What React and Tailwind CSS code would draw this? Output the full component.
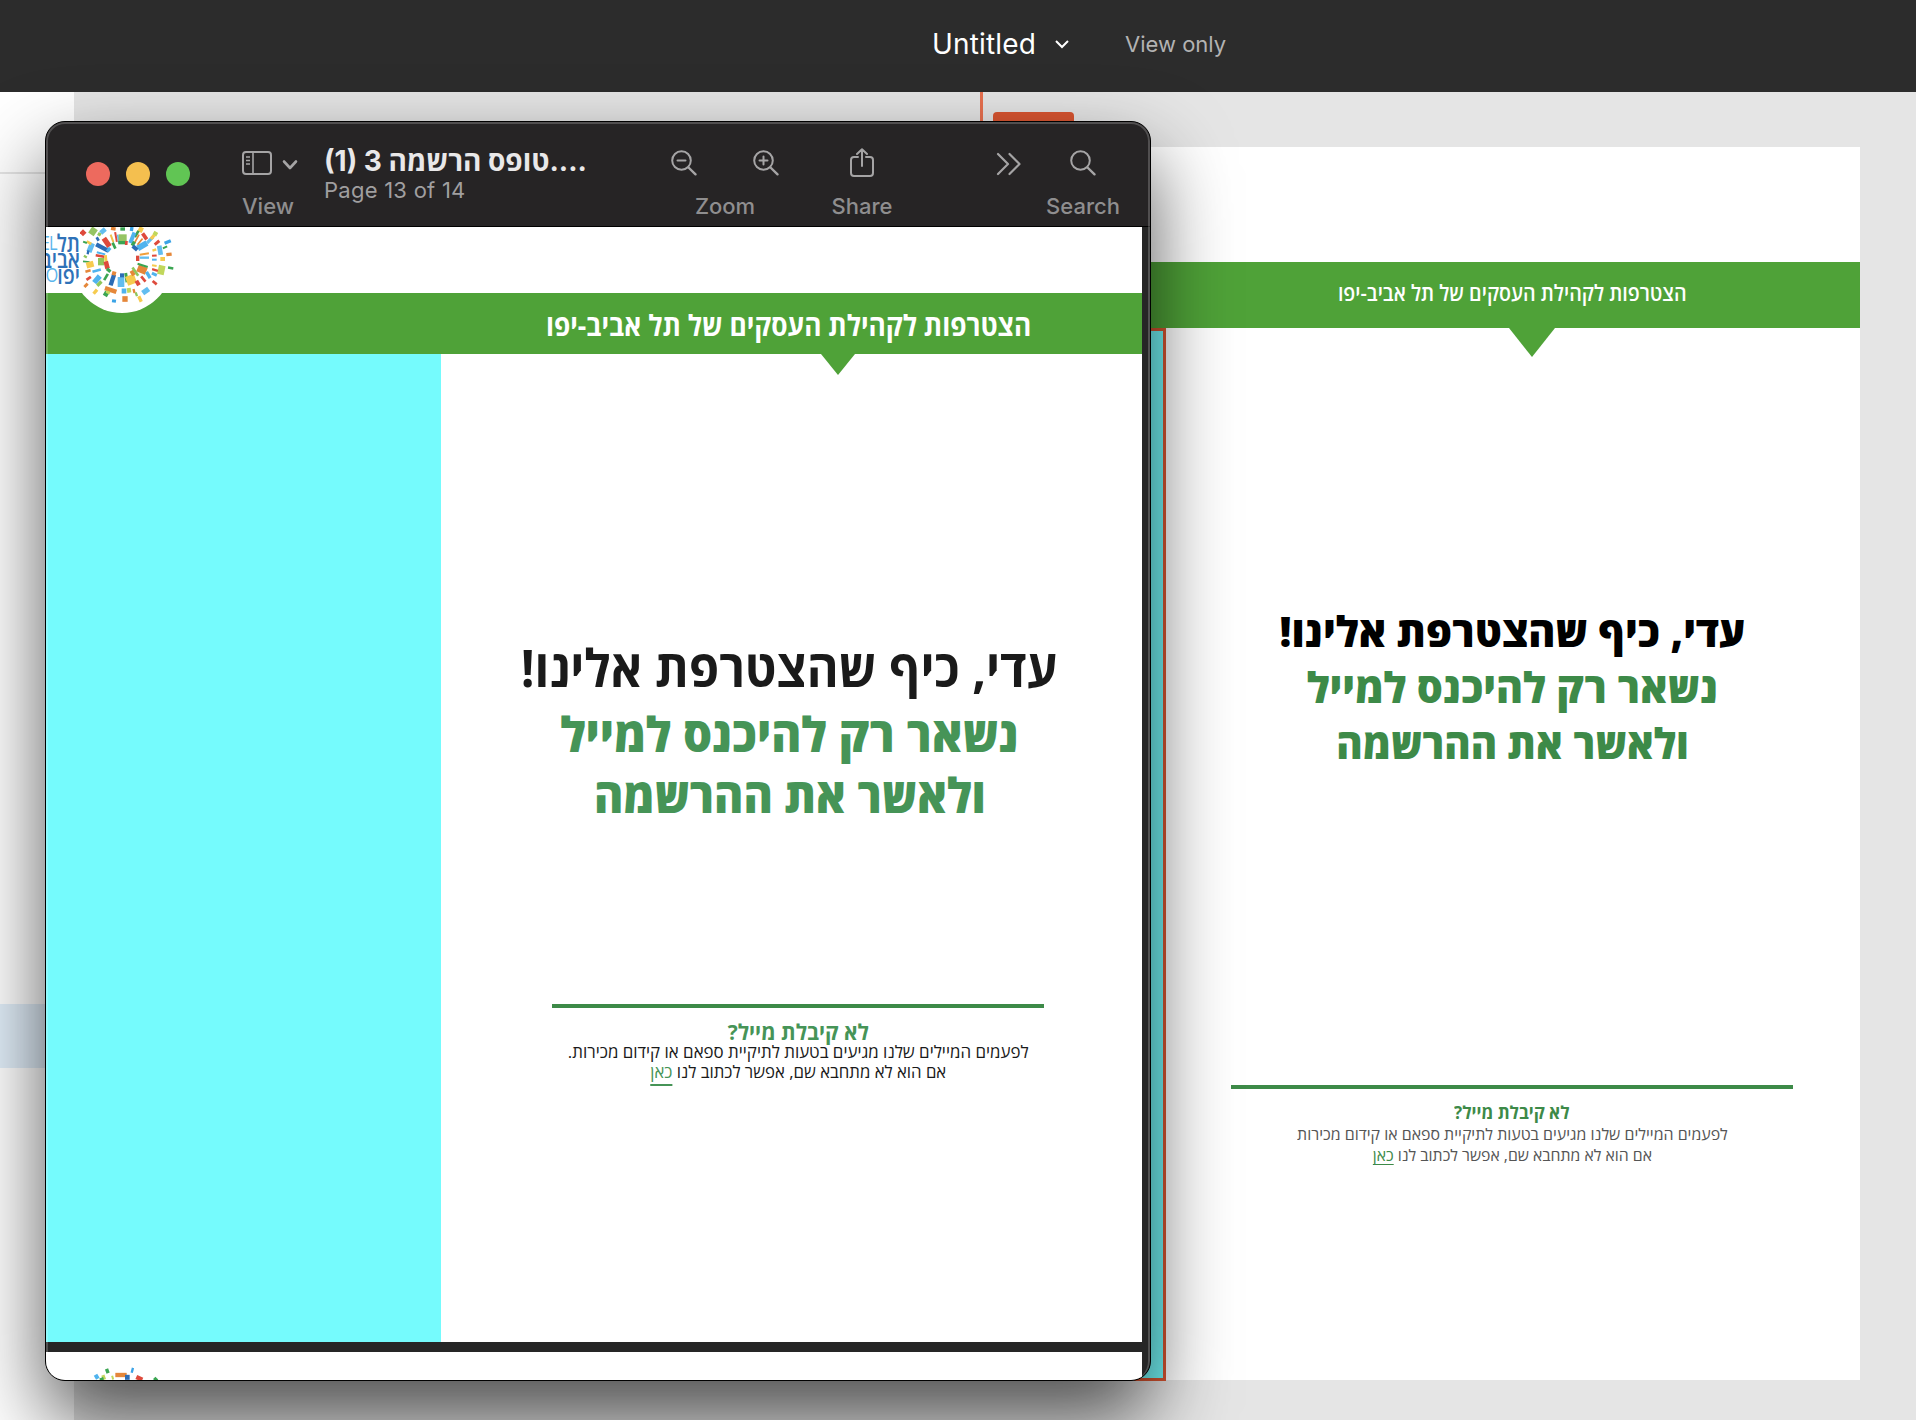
import React from "react";

const HEB = "font-['Open_Sans','Liberation_Sans',sans-serif]";

const BURST = [
  [129, 53, 15, 15, 45, "#de4a3c"], [159, 49, 20, 22, 35, "#95c463"], [189, 48, 18, 14, -40, "#62bdf0"],
  [178, 58, 10, 10, 30, "#8fc65c"], [220, 41, 14, 10, 10, "#e5873a"], [248, 42, 14, 10, 0, "#3ba552"],
  [275, 42, 10, 12, 10, "#3aa3e6"], [302, 44, 14, 16, 25, "#f6cb4f"], [290, 57, 8, 22, 30, "#3f9f4f"],
  [200, 82, 16, 30, -35, "#de4a3c"], [173, 72, 8, 12, -30, "#2b6cb5"], [187, 98, 13, 42, -62, "#2b6cb5"],
  [206, 104, 14, 10, -50, "#4fb3ee"], [222, 92, 8, 20, -25, "#3ba552"], [216, 70, 6, 24, -20, "#f0c04a"],
  [228, 66, 6, 30, -10, "#de4a3c"], [235, 72, 5, 26, -8, "#62bdf0"], [248, 68, 24, 20, 0, "#95c463"],
  [246, 83, 22, 10, 0, "#3ba552"], [259, 84, 8, 12, 5, "#de4a3c"], [277, 68, 12, 34, 22, "#4fb3ee"],
  [290, 72, 5, 30, 28, "#e5873a"], [280, 86, 10, 14, 30, "#3ba552"], [307, 92, 32, 18, -30, "#4fb3ee"],
  [285, 99, 18, 12, 40, "#2b6cb5"], [300, 80, 24, 5, -50, "#e5873a"], [314, 64, 22, 11, 55, "#de4a3c"],
  [330, 75, 10, 26, 45, "#62bdf0"], [338, 66, 10, 16, 40, "#f6cb4f"], [346, 56, 13, 12, 30, "#c1d75b"],
  [351, 83, 18, 9, -40, "#de4a3c"], [383, 81, 20, 10, -22, "#3aa3e6"], [360, 106, 14, 28, -10, "#62bdf0"],
  [343, 105, 12, 7, -20, "#f6cb4f"], [375, 97, 14, 6, -25, "#3ba552"], [343, 122, 14, 6, -5, "#de4a3c"],
  [343, 134, 14, 6, 0, "#4fb3ee"], [387, 118, 16, 10, -6, "#e5873a"], [368, 132, 14, 12, 0, "#f6cb4f"],
  [152, 98, 16, 28, 22, "#62bdf0"], [147, 83, 16, 8, 30, "#f6cb4f"], [135, 82, 12, 6, 20, "#3ba552"],
  [144, 112, 7, 12, 10, "#2b6cb5"], [139, 140, 20, 5, 5, "#3ba552"], [150, 149, 22, 18, -15, "#f6cb4f"],
  [136, 125, 10, 7, 30, "#8fc65c"], [183, 140, 18, 22, 0, "#8fc65c"], [180, 123, 26, 8, 10, "#de4a3c"],
  [183, 115, 26, 6, 14, "#4fb3ee"], [197, 130, 9, 20, -5, "#f6cb4f"], [200, 150, 14, 22, -15, "#de4a3c"],
  [170, 167, 26, 8, -15, "#4fb3ee"], [144, 168, 16, 8, -15, "#e5873a"], [206, 166, 14, 10, 40, "#3ba552"],
  [138, 211, 14, 9, -45, "#e5873a"], [146, 190, 16, 8, -35, "#de4a3c"], [166, 230, 10, 16, 40, "#f6cb4f"],
  [171, 193, 26, 16, -50, "#4fb3ee"], [178, 206, 18, 10, -45, "#8fc65c"], [198, 186, 8, 22, 30, "#3ba552"],
  [217, 195, 13, 34, 18, "#2b6cb5"], [222, 175, 12, 12, 15, "#e5873a"], [243, 201, 20, 30, 0, "#62bdf0"],
  [246, 181, 12, 12, 0, "#2b6cb5"], [259, 188, 9, 28, -8, "#3ba552"], [273, 194, 28, 28, -20, "#f6cb4f"],
  [278, 174, 12, 16, -30, "#e5873a"], [293, 204, 12, 16, -30, "#de4a3c"], [286, 170, 8, 30, -35, "#8fc65c"],
  [306, 164, 28, 22, 22, "#e5873a"], [308, 151, 32, 6, 18, "#3ba552"], [325, 180, 10, 22, -30, "#4fb3ee"],
  [344, 203, 16, 8, 40, "#de4a3c"], [364, 165, 20, 28, 12, "#c1d75b"], [345, 165, 18, 7, 15, "#de4a3c"],
  [343, 178, 16, 9, 25, "#4fb3ee"], [392, 159, 16, 8, 10, "#3ba552"], [343, 152, 14, 6, 10, "#f6cb4f"],
  [293, 130, 10, 16, 0, "#de4a3c"], [313, 117, 28, 6, -10, "#f0a03c"], [313, 128, 28, 7, 0, "#62bdf0"],
  [212, 225, 36, 14, 18, "#e5873a"], [198, 237, 14, 14, 30, "#3ba552"], [204, 232, 12, 8, 25, "#c1d75b"],
  [222, 258, 12, 9, 8, "#3aa3e6"], [255, 252, 16, 17, 0, "#e5873a"], [252, 228, 14, 15, 0, "#4fb3ee"],
  [267, 226, 12, 14, -8, "#c1d75b"], [282, 228, 7, 12, -15, "#e5873a"], [300, 252, 10, 18, -25, "#f6cb4f"],
  [317, 228, 22, 16, -35, "#62bdf0"], [289, 238, 7, 12, -20, "#8fc65c"], [310, 192, 8, 20, -40, "#de4a3c"],
];

const BURST_NEXT = [
  [290, 170, 12, 14, -30, "#4fb3ee"], [322, 153, 10, 14, -20, "#3ba552"], [311, 172, 10, 14, -20, "#c1d75b"],
  [305, 177, 12, 8, -20, "#3ba552"], [338, 173, 6, 12, -15, "#c1d75b"], [363, 165, 34, 13, 0, "#e5873a"],
  [382, 172, 14, 15, 0, "#2b6cb5"], [397, 151, 7, 15, 15, "#3aa3e6"], [418, 175, 20, 13, 25, "#de4a3c"],
  [467, 178, 12, 10, 45, "#3ba552"],
];

function Burst({ pieces, viewBox, className }) {
  return (
    <svg viewBox={viewBox} className={className}>
      {pieces.map(([x, y, w, h, r, fill], i) => (
        <rect key={i} x={x - w / 2} y={y - h / 2} width={w} height={h} fill={fill} transform={`rotate(${r} ${x} ${y})`} />
      ))}
    </svg>
  );
}

function Line({ className = "", inner = "", children }) {
  return (
    <div dir="rtl" className={`flex items-center justify-center whitespace-nowrap ${HEB} ${className}`}>
      <span className={`block shrink-0 ${inner}`}>{children}</span>
    </div>
  );
}

function Lens({ children }) {
  return (
    <svg viewBox="0 0 26 26" className="h-[26px] w-[26px]" fill="none" stroke="#a5a4a5" strokeWidth="2" strokeLinecap="round">
      <circle cx="10.5" cy="10.5" r="9.3" />
      <path d="M17.5 17.5 24.5 24.3" strokeWidth="2.4" />
      {children}
    </svg>
  );
}

function TopBar() {
  return (
    <header className="flex h-[92px] items-center bg-[#2c2c2c] pb-[4px] pl-[932px] font-['Inter',sans-serif]">
      <span className="w-[104px] whitespace-nowrap text-[28px] leading-none tracking-[0.15px] text-white">Untitled</span>
      <svg viewBox="0 0 16 10" className="ml-[18px] h-[10px] w-[16px]" fill="none" stroke="#fff" strokeWidth="2">
        <path d="M2 2l6 6 6-6" />
      </svg>
      <span className="ml-[55px] whitespace-nowrap text-[22px] leading-none text-[#b3b3b3]">View only</span>
    </header>
  );
}

function Artboard() {
  return (
    <section className="ml-[1060px] mt-[55px] flex h-[1233px] w-[726px] flex-col bg-white">
      <div className="h-[115px]" />
      <div className="h-[66px] bg-[#4fa238]">
        <Line className="h-[60px] pl-[30px] text-[22px] font-semibold text-white" inner="scale-x-[0.893]">
          הצטרפות לקהילת העסקים של תל אביב-יפו
        </Line>
      </div>
      <div className="flex h-[1052px]">
        <div className="h-[1053px] w-[32px] shrink-0 border-[3px] border-l-0 border-[#d95531] bg-[#75fbfd]" />
        <div className="flex grow flex-col">
          <svg viewBox="0 0 46 29" className="ml-[343px] h-[29px] w-[46px]" fill="#4fa238">
            <path d="M0 0h46L23 29z" />
          </svg>
          <div className="mt-[245px] w-[693px]">
            <Line className="h-[56px] text-[42px] font-extrabold text-black" inner="scale-x-[0.981]">עדי, כיף שהצטרפת אלינו!</Line>
            <Line className="h-[56px] text-[42px] font-extrabold text-[#3d8a48]" inner="scale-x-[0.977]">נשאר רק להיכנס למייל</Line>
            <Line className="h-[56px] text-[42px] font-extrabold text-[#3d8a48]" inner="scale-x-[0.955]">ולאשר את ההרשמה</Line>
          </div>
          <div className="ml-[65px] mt-[315px] w-[562px] border-t-[4px] border-[#3d8a48] pt-[13px]">
            <Line className="h-[21px] pr-px text-[18px] font-bold text-[#3d8a48]" inner="scale-x-[0.95]">לא קיבלת מייל?</Line>
            <Line className="h-[21px] text-[16px] text-[#555]" inner="scale-x-[0.995]">לפעמים המיילים שלנו מגיעים בטעות לתיקיית ספאם או קידום מכירות</Line>
            <Line className="h-[21px] text-[16px] text-[#555]" inner="scale-x-[0.987]">
              אם הוא לא מתחבא שם, אפשר לכתוב לנו <span className="text-[#3d8a48] underline decoration-1 underline-offset-[3px] [text-decoration-skip-ink:none]">כאן</span>
            </Line>
          </div>
        </div>
      </div>
    </section>
  );
}

function TitleBar() {
  return (
    <div className="flex h-[105px] items-start border-b border-black bg-[#262425] font-['Inter',sans-serif] text-[#8f8e8f]">
      <div className="ml-[40px] mt-[40px] flex gap-[16px]">
        <span className="h-[24px] w-[24px] rounded-full bg-[#ed6a5e]" />
        <span className="h-[24px] w-[24px] rounded-full bg-[#f4bf4f]" />
        <span className="h-[24px] w-[24px] rounded-full bg-[#61c554]" />
      </div>
      <div className="ml-[52px] mt-[29px] w-[58px]">
        <div className="flex items-center">
          <svg viewBox="0 0 30 24" className="h-[24px] w-[30px]" fill="none" stroke="#a5a4a5" strokeWidth="2">
            <rect x="1" y="1" width="28" height="22" rx="3" />
            <path d="M11 1v22M4 6h4M4 9.500h4M4 13h4" strokeWidth="1.600" />
          </svg>
          <svg viewBox="0 0 16 12" className="ml-[10px] mt-[3px] h-[12px] w-[16px]" fill="none" stroke="#a5a4a5" strokeWidth="2.600" strokeLinecap="round" strokeLinejoin="round">
            <path d="M2 2.500l6 6.500 6-6.500" />
          </svg>
        </div>
        <div className="mt-[19px] text-[22px] font-medium leading-[24px]">View</div>
      </div>
      <div className="ml-[24px] mt-[23px] w-[269px] whitespace-nowrap">
        <div className="text-[28px] font-bold leading-[32px] text-[#e9e8e9] font-['Inter','Open_Sans',sans-serif]">(1) 3 טופס הרשמה....</div>
        <div className="text-[22px] leading-[26px] tracking-[0.25px] text-[#a09fa0]">Page 13 of 14</div>
      </div>
      <div className="ml-[78px] mt-[28px] flex w-[108px] flex-col items-center">
        <div className="flex w-full justify-between">
          <Lens><path d="M6.500 10.500h8" /></Lens>
          <Lens><path d="M6.500 10.500h8M10.500 6.500v8" /></Lens>
        </div>
        <div className="mt-[18px] text-[22px] font-medium leading-[24px]">Zoom</div>
      </div>
      <div className="ml-[47px] mt-[26px] flex w-[72px] flex-col items-center">
        <svg viewBox="0 0 24 29" className="h-[29px] w-[24px]" fill="none" stroke="#a5a4a5" strokeWidth="2" strokeLinecap="round" strokeLinejoin="round">
          <path d="M8 9H4a3 3 0 0 0-3 3v13a3 3 0 0 0 3 3h16a3 3 0 0 0 3-3V12a3 3 0 0 0-3-3h-4M12 18V1.500M7 6l5-4.800L17 6" />
        </svg>
        <div className="mt-[17px] text-[22px] font-medium leading-[24px]">Share</div>
      </div>
      <svg viewBox="0 0 26 24" className="ml-[98px] mt-[30px] h-[24px] w-[26px]" fill="none" stroke="#a5a4a5" strokeWidth="2.200" strokeLinecap="round" strokeLinejoin="round">
        <path d="M2 2l10 10L2 22M13.500 2l10 10-10 10" />
      </svg>
      <div className="ml-[21px] mt-[28px] flex w-[80px] flex-col items-center">
        <Lens />
        <div className="mt-[18px] text-[22px] font-medium leading-[24px]">Search</div>
      </div>
    </div>
  );
}

function LogoStrip() {
  return (
    <div className="relative h-[66px] bg-white">
      <div className="absolute left-0 top-0 z-10 h-[90px] w-[140px] overflow-hidden">
        <div className="absolute left-[26px] top-[-14px] h-[100px] w-[100px] rounded-full bg-white" />
        <div className={`absolute left-[-26px] top-[8px] flex w-[60px] origin-right scale-x-[0.82] flex-col text-[24px] font-semibold leading-[16px] text-[#2f72b8] ${HEB}`}>
          <div className="flex items-center justify-end whitespace-nowrap"><span className="text-[20px] font-medium tracking-[-1px] text-[#5bb5ec]">EL</span><span>תל</span></div>
          <div className="flex justify-end whitespace-nowrap"><span>אביב</span></div>
          <div className="flex items-center justify-end whitespace-nowrap"><span className="text-[20px] font-medium tracking-[-1px] text-[#5bb5ec]">FO</span><span>יפו</span></div>
        </div>
        <Burst pieces={BURST} viewBox="120 36 285 234" className="absolute left-[34px] top-0 h-[78px] w-[95px]" />
      </div>
    </div>
  );
}

function PreviewWindow() {
  return (
    <section className="absolute left-[45px] top-[121px] flex h-[1260px] w-[1106px] flex-col overflow-hidden rounded-[20px] border border-black bg-[#262626] shadow-[0_38px_80px_rgba(0,0,0,0.66)]">
      <TitleBar />
      <div className="w-[1096px]">
        <LogoStrip />
        <div className="h-[61px] bg-[#4fa238]">
          <Line className="h-[63px] pl-[390px] text-[29px] font-bold text-white" inner="scale-x-[0.907]">
            הצטרפות לקהילת העסקים של תל אביב-יפו
          </Line>
        </div>
        <div className="flex h-[988px] bg-white">
          <div className="w-[395px] shrink-0 bg-[#75fbfd]" />
          <div className="flex grow flex-col">
            <svg viewBox="0 0 34 21" className="ml-[380px] h-[21px] w-[34px]" fill="#4fa238">
              <path d="M0 0h34L17 21z" />
            </svg>
            <div className="mt-[258px] w-[697px]">
              <Line className="h-[68px] text-[52px] font-bold text-[#1a1a1a]" inner="scale-x-[0.935]">עדי, כיף שהצטרפת אלינו!</Line>
              <Line className="h-[66px] text-[48px] font-extrabold text-[#469457]" inner="scale-x-[0.953]">נשאר רק להיכנס למייל</Line>
              <Line className="h-[56px] text-[48px] font-extrabold text-[#469457]" inner="scale-x-[0.929]">ולאשר את ההרשמה</Line>
            </div>
            <div className="ml-[111px] mt-[181px] w-[492px] border-t-[4px] border-[#3d8a48] pt-[12px]">
              <Line className="h-[22px] text-[22px] font-bold text-[#469457]" inner="scale-x-[0.95]">לא קיבלת מייל?</Line>
              <Line className="h-[20px] text-[17px] text-[#1a1a1a]" inner="scale-x-[0.992]">לפעמים המיילים שלנו מגיעים בטעות לתיקיית ספאם או קידום מכירות.</Line>
              <Line className="h-[20px] text-[17px] text-[#1a1a1a]" inner="scale-x-[0.985]">
                אם הוא לא מתחבא שם, אפשר לכתוב לנו <span className="text-[#469457] underline decoration-2 underline-offset-[6px] [text-decoration-skip-ink:none]">כאן</span>
              </Line>
            </div>
          </div>
        </div>
        <div className="h-[10px] bg-[#262626]" />
        <div className="h-[28px] bg-white">
          <Burst pieces={BURST_NEXT} viewBox="270 96 210 84" className="ml-[44px] h-[28px] w-[70px]" />
        </div>
      </div>
      <div className="pointer-events-none absolute inset-0 rounded-[19px] border-2 border-b-0 border-white/20" />
    </section>
  );
}

export default function App() {
  return (
    <div className="relative h-[1420px] w-[1916px] overflow-hidden bg-[#e5e5e5]">
      <TopBar />
      <main className="relative flex h-[1328px] overflow-hidden">
        <aside className="w-[74px] shrink-0 bg-white">
          <div className="h-[82px] border-b-2 border-[#e5e5e5]" />
          <div className="mt-[830px] h-[64px] bg-[#e2effa]" />
        </aside>
        <div className="relative">
          <div className="absolute left-[906px] top-0 h-[60px] w-[3px] bg-[#e8704f]" />
          <div className="absolute left-[919px] top-[20px] h-[40px] w-[81px] rounded-[4px] bg-[#d95531]" />
          <Artboard />
        </div>
      </main>
      <PreviewWindow />
    </div>
  );
}
